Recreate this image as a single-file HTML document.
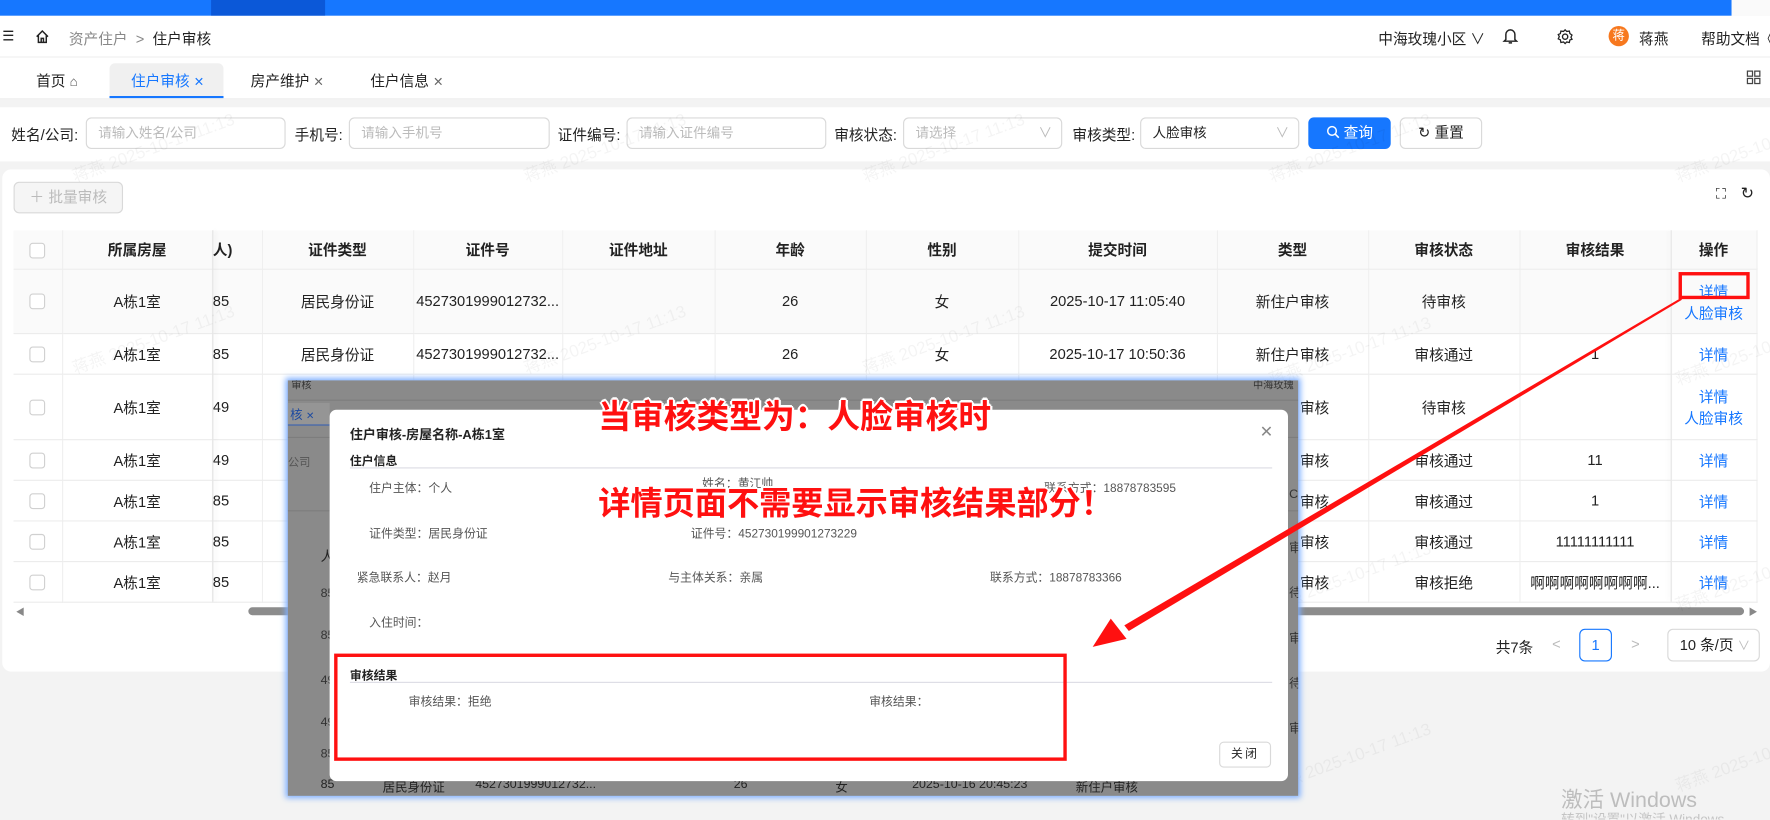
<!DOCTYPE html>
<html><head><meta charset="utf-8">
<style>
*{box-sizing:border-box;margin:0;padding:0}
html,body{width:1770px;height:820px;overflow:hidden;background:#f3f3f3;font-family:"Liberation Sans","Noto Sans CJK SC",sans-serif;color:#222}
#w{position:absolute;left:0;top:0;width:1568px;height:726px;transform:scale(1.12883);transform-origin:0 0;background:#f3f3f3;overflow:hidden}
.a{position:absolute;white-space:nowrap}
.inp{position:absolute;height:28px;border:1px solid #d9d9d9;border-radius:5px;background:#fff;font-size:12px;color:#bbb;padding:0 10px;line-height:26px}
table{border-collapse:collapse;table-layout:fixed;font-size:13px}
td,th{border-bottom:1px solid #ececec;border-right:1px solid #efefef;text-align:center;overflow:hidden;white-space:nowrap}
th{background:#fafafa;font-weight:bold;height:34px}
.cb{display:inline-block;width:14px;height:14px;border:1px solid #d0d0d0;border-radius:3px;background:#fff;vertical-align:middle}
.lk{color:#1677ff}
.wm{position:absolute;color:rgba(0,0,0,0.045);font-size:15px;transform:rotate(-20deg);white-space:nowrap}
.rt{position:absolute;color:#ff1010;font-weight:bold;white-space:nowrap;text-shadow:2px 0 #fff,-2px 0 #fff,0 2px #fff,0 -2px #fff,1px 1px #fff,-1px -1px #fff,1px -1px #fff,-1px 1px #fff}
.ml{position:absolute;font-size:10.5px;color:#555;white-space:nowrap}
.lb{position:absolute;top:109px;font-size:13px;white-space:nowrap}
</style></head><body><div id="w">
<div class="a" style="left:0;top:0;width:1534px;height:14px;background:#1677ff"></div>
<div class="a" style="left:187px;top:0;width:101px;height:14px;background:#0b58d8"></div>
<div class="a" style="left:1534px;top:0;width:34px;height:14px;background:#fafafa"></div>
<div class="a" style="left:0;top:14px;width:1568px;height:37px;background:#fff;border-bottom:1px solid #eee"></div>
<div class="a" style="left:2px;top:25px;font-size:12px">☰</div>
<svg class="a" style="left:31px;top:26px" width="13" height="13" viewBox="0 0 13 13"><path d="M1.5 6.5 L6.5 1.5 L11.5 6.5 M3 5.5 V11.5 H10 V5.5 M5.5 11.5 V8 H7.5 V11.5" fill="none" stroke="#222" stroke-width="1.3"/></svg>
<div class="a" style="left:61px;top:24px;font-size:13px;color:#888">资产住户 &nbsp;&gt;&nbsp; <span style="color:#222">住户审核</span></div>
<div class="a" style="left:1221px;top:24px;font-size:13px">中海玫瑰小区 ∨</div>
<svg class="a" style="left:1331px;top:24px" width="14" height="16" viewBox="0 0 14 16"><path d="M3 11 V6.5 A4 4 0 0 1 11 6.5 V11 L12.5 12.5 H1.5 Z M5.5 14 H8.5" fill="none" stroke="#222" stroke-width="1.3"/></svg>
<svg class="a" style="left:1379px;top:25px" width="15" height="15" viewBox="0 0 16 16"><circle cx="8" cy="8" r="2.5" fill="none" stroke="#222" stroke-width="1.3"/><path d="M8 1.5 L9.5 3 L12 2.7 L12.5 5 L14.5 6.5 L13.5 8.5 L14.5 10.5 L12.5 11 L12 13.5 L9.5 13 L8 14.5 L6.5 13 L4 13.5 L3.5 11 L1.5 10 L2.5 8 L1.5 6 L3.5 5 L4 2.7 L6.5 3 Z" fill="none" stroke="#222" stroke-width="1.2"/></svg>
<div class="a" style="left:1425px;top:23px;width:18px;height:18px;border-radius:9px;background:#f7781e;color:#fff;font-size:11px;text-align:center;line-height:18px">蒋</div>
<div class="a" style="left:1452px;top:24px;font-size:13px">蒋燕</div>
<div class="a" style="left:1507px;top:24px;font-size:13px">帮助文档《</div>
<div class="a" style="left:0;top:51px;width:1568px;height:37px;background:#fff;border-bottom:1px solid #eee"></div>
<div class="a" style="left:32px;top:61px;font-size:13px">首页 <span style="font-size:12px;color:#555">⌂</span></div>
<div class="a" style="left:97px;top:56px;width:101px;height:31px;background:#f0f0f0;border-radius:5px 5px 0 0;border-bottom:2px solid #1677ff"></div>
<div class="a" style="left:116px;top:61px;font-size:13px;color:#1677ff">住户审核 <span style="font-size:11px">✕</span></div>
<div class="a" style="left:222px;top:61px;font-size:13px">房产维护 <span style="font-size:11px;color:#666">✕</span></div>
<div class="a" style="left:328px;top:61px;font-size:13px">住户信息 <span style="font-size:11px;color:#666">✕</span></div>
<svg class="a" style="left:1547px;top:62px" width="13" height="13" viewBox="0 0 13 13"><g fill="none" stroke="#444" stroke-width="1.1"><rect x="1" y="1" width="4.5" height="4.5"/><rect x="7.5" y="1" width="4.5" height="4.5"/><rect x="1" y="7.5" width="4.5" height="4.5"/><rect x="7.5" y="7.5" width="4.5" height="4.5"/></g></svg>
<div class="a" style="left:0;top:95px;width:1568px;height:48px;background:#fff"></div>
<div class="lb" style="left:10px">姓名/公司:</div>
<div class="inp" style="left:76px;top:104px;width:177px">请输入姓名/公司</div>
<div class="lb" style="left:261px">手机号:</div>
<div class="inp" style="left:309px;top:104px;width:178px">请输入手机号</div>
<div class="lb" style="left:494px">证件编号:</div>
<div class="inp" style="left:555px;top:104px;width:177px">请输入证件编号</div>
<div class="lb" style="left:739px">审核状态:</div>
<div class="inp" style="left:800px;top:104px;width:141px">请选择<span style="position:absolute;right:8px;color:#bbb">∨</span></div>
<div class="lb" style="left:950px">审核类型:</div>
<div class="inp" style="left:1010px;top:104px;width:141px;color:#222">人脸审核<span style="position:absolute;right:8px;color:#bbb">∨</span></div>
<div class="a" style="left:1159px;top:104px;width:73px;height:28px;border-radius:5px;background:#1677ff;color:#fff;font-size:13px;line-height:28px;text-align:center">
<svg width="12" height="12" viewBox="0 0 12 12" style="vertical-align:-1px"><circle cx="5" cy="5" r="3.8" fill="none" stroke="#fff" stroke-width="1.3"/><path d="M7.8 7.8 L11 11" stroke="#fff" stroke-width="1.4"/></svg> 查询</div>
<div class="a" style="left:1240px;top:104px;width:73px;height:28px;border-radius:5px;border:1px solid #d9d9d9;background:#fff;font-size:13px;line-height:26px;text-align:center">↻ 重置</div>
<div class="a" style="left:2px;top:150px;width:1566px;height:445px;background:#fff;border-radius:8px"></div>
<div class="a" style="left:12px;top:161px;width:97px;height:28px;border:1px solid #d9d9d9;border-radius:5px;background:#f5f5f5;color:#bbb;font-size:13px;line-height:26px;text-align:center">＋ 批量审核</div>
<div class="a" style="left:1520px;top:164px;font-size:13px">⛶</div>
<div class="a" style="left:1542px;top:163px;font-size:14px">↻</div>
<table class="a" style="left:12px;top:204px;width:1544px">
<colgroup><col style="width:43px"><col style="width:133px"><col style="width:44px"><col style="width:134px"><col style="width:132px"><col style="width:135px"><col style="width:134px"><col style="width:135px"><col style="width:176px"><col style="width:134px"><col style="width:134px"><col style="width:134px"><col style="width:76px"></colgroup>
<tr><th><span class="cb"></span></th><th>所属房屋</th><th style="text-align:left">人)</th><th>证件类型</th><th>证件号</th><th>证件地址</th><th>年龄</th><th>性别</th><th>提交时间</th><th>类型</th><th>审核状态</th><th>审核结果</th><th>操作</th></tr>
<tr style="height:57px;background:#fafafa"><td><span class="cb"></span></td><td>A栋1室</td><td style="text-align:left">85</td><td>居民身份证</td><td>4527301999012732...</td><td></td><td>26</td><td>女</td><td>2025-10-17 11:05:40</td><td>新住户审核</td><td>待审核</td><td></td><td class="lk">详情<br>人脸审核</td></tr>
<tr style="height:36px"><td><span class="cb"></span></td><td>A栋1室</td><td style="text-align:left">85</td><td>居民身份证</td><td>4527301999012732...</td><td></td><td>26</td><td>女</td><td>2025-10-17 10:50:36</td><td>新住户审核</td><td>审核通过</td><td>1</td><td class="lk">详情</td></tr>
<tr style="height:58px"><td><span class="cb"></span></td><td>A栋1室</td><td style="text-align:left">49</td><td>居民身份证</td><td>4527301999012732...</td><td></td><td>26</td><td>女</td><td>2025-10-17 10:40:11</td><td>新住户审核</td><td>待审核</td><td></td><td class="lk">详情<br>人脸审核</td></tr>
<tr style="height:36px"><td><span class="cb"></span></td><td>A栋1室</td><td style="text-align:left">49</td><td>居民身份证</td><td>4527301999012732...</td><td></td><td>26</td><td>女</td><td>2025-10-17 10:30:11</td><td>新住户审核</td><td>审核通过</td><td>11</td><td class="lk">详情</td></tr>
<tr style="height:36px"><td><span class="cb"></span></td><td>A栋1室</td><td style="text-align:left">85</td><td>居民身份证</td><td>4527301999012732...</td><td></td><td>26</td><td>女</td><td>2025-10-17 10:20:11</td><td>新住户审核</td><td>审核通过</td><td>1</td><td class="lk">详情</td></tr>
<tr style="height:36px"><td><span class="cb"></span></td><td>A栋1室</td><td style="text-align:left">85</td><td>居民身份证</td><td>4527301999012732...</td><td></td><td>26</td><td>女</td><td>2025-10-17 10:10:11</td><td>新住户审核</td><td>审核通过</td><td>11111111111</td><td class="lk">详情</td></tr>
<tr style="height:36px"><td><span class="cb"></span></td><td>A栋1室</td><td style="text-align:left">85</td><td>居民身份证</td><td>4527301999012732...</td><td></td><td>26</td><td>女</td><td>2025-10-16 20:45:23</td><td>新住户审核</td><td>审核拒绝</td><td>啊啊啊啊啊啊啊啊...</td><td class="lk">详情</td></tr>
</table>
<div class="a" style="left:188px;top:204px;width:1px;height:329px;background:#e4e4e4;box-shadow:2px 0 4px rgba(0,0,0,0.08)"></div>
<div class="a" style="left:1480px;top:204px;width:1px;height:329px;background:#e8e8e8;box-shadow:-2px 0 4px rgba(0,0,0,0.06)"></div>
<div class="a" style="left:14px;top:537px;font-size:8px;color:#888">◀</div>
<div class="a" style="left:220px;top:538px;width:1325px;height:7px;border-radius:4px;background:#8c8c8c"></div>
<div class="a" style="left:1549px;top:537px;font-size:8px;color:#888">▶</div>
<div class="a" style="left:1325px;top:563px;font-size:13px">共7条</div>
<div class="a" style="left:1375px;top:563px;font-size:13px;color:#bbb">&lt;</div>
<div class="a" style="left:1399px;top:557px;width:29px;height:29px;border:1px solid #1677ff;border-radius:5px;color:#1677ff;text-align:center;line-height:27px;font-size:13px">1</div>
<div class="a" style="left:1445px;top:563px;font-size:13px;color:#bbb">&gt;</div>
<div class="a" style="left:1477px;top:557px;width:82px;height:29px;border:1px solid #d9d9d9;border-radius:5px;font-size:13px;line-height:27px;padding-left:10px">10 条/页 <span style="color:#bbb;font-size:11px">∨</span></div>
<div class="wm" style="left:60px;top:120px">蒋燕 2025-10-17 11:13</div>
<div class="wm" style="left:460px;top:120px">蒋燕 2025-10-17 11:13</div>
<div class="wm" style="left:760px;top:120px">蒋燕 2025-10-17 11:13</div>
<div class="wm" style="left:1120px;top:120px">蒋燕 2025-10-17 11:13</div>
<div class="wm" style="left:1480px;top:120px">蒋燕 2025-10-17 11:13</div>
<div class="wm" style="left:60px;top:290px">蒋燕 2025-10-17 11:13</div>
<div class="wm" style="left:460px;top:290px">蒋燕 2025-10-17 11:13</div>
<div class="wm" style="left:760px;top:290px">蒋燕 2025-10-17 11:13</div>
<div class="wm" style="left:1120px;top:300px">蒋燕 2025-10-17 11:13</div>
<div class="wm" style="left:1480px;top:300px">蒋燕 2025-10-17 11:13</div>
<div class="wm" style="left:1120px;top:500px">蒋燕 2025-10-17 11:13</div>
<div class="wm" style="left:1480px;top:500px">蒋燕 2025-10-17 11:13</div>
<div class="wm" style="left:1120px;top:660px">蒋燕 2025-10-17 11:13</div>
<div class="wm" style="left:1480px;top:660px">蒋燕 2025-10-17 11:13</div>
<div class="a" style="left:1383px;top:694px;font-size:19px;color:#bdbdbd">激活 Windows</div>
<div class="a" style="left:1383px;top:717px;font-size:12px;color:#c4c4c4">转到"设置"以激活 Windows</div>
<div class="a" style="left:255px;top:337px;width:895px;height:368px;background:#8a8a8a;box-shadow:0 0 5px 2px #7fb0ff;overflow:hidden">
  <div class="a" style="left:3px;top:-3px;font-size:9px;color:#333">审核</div>
  <div class="a" style="left:855px;top:-3px;font-size:9px;color:#333">中海玫瑰</div>
  <div class="a" style="left:0;top:17px;width:895px;height:1px;background:#7d7d7d"></div>
  <div class="a" style="left:0;top:20px;width:37px;height:20px;background:#959595;border-bottom:1px solid #3a62b0"></div>
  <div class="a" style="left:2px;top:22px;font-size:11px;color:#1d4aa0">核 <span style="font-size:9px">✕</span></div>
  <div class="a" style="left:0;top:50px;width:895px;height:1px;background:#7d7d7d"></div>
  <div class="a" style="left:0;top:64px;font-size:10px;color:#555">公司</div>
  <div class="a" style="left:0;top:115px;width:895px;height:1px;background:#7d7d7d"></div>
  <div class="a" style="left:29px;top:147px;font-size:12px;color:#222">人</div>
  <div class="a" style="left:29px;top:183px;font-size:11px;color:#333">85</div>
  <div class="a" style="left:29px;top:220px;font-size:11px;color:#333">85</div>
  <div class="a" style="left:29px;top:260px;font-size:11px;color:#333">49</div>
  <div class="a" style="left:29px;top:297px;font-size:11px;color:#333">49</div>
  <div class="a" style="left:29px;top:325px;font-size:11px;color:#333">85</div>
  <div class="a" style="left:29px;top:352px;font-size:11px;color:#222">85</div>
  <div class="a" style="left:84px;top:352px;font-size:11px;color:#222">居民身份证</div>
  <div class="a" style="left:166px;top:352px;font-size:11px;color:#222">4527301999012732...</div>
  <div class="a" style="left:395px;top:352px;font-size:11px;color:#222">26</div>
  <div class="a" style="left:485px;top:352px;font-size:11px;color:#222">女</div>
  <div class="a" style="left:553px;top:352px;font-size:11px;color:#222">2025-10-16 20:45:23</div>
  <div class="a" style="left:698px;top:352px;font-size:11px;color:#222">新住户审核</div>
  <div class="a" style="left:887px;top:95px;font-size:11px;color:#333">C</div>
  <div class="a" style="left:887px;top:140px;font-size:11px;color:#333">审</div>
  <div class="a" style="left:887px;top:180px;font-size:11px;color:#333">待</div>
  <div class="a" style="left:887px;top:220px;font-size:11px;color:#333">审</div>
  <div class="a" style="left:887px;top:260px;font-size:11px;color:#333">待</div>
  <div class="a" style="left:887px;top:300px;font-size:11px;color:#333">审</div>
</div>
<div class="a" style="left:292px;top:363px;width:849px;height:329px;background:#fff;border-radius:6px"></div>
<div class="a" style="left:310px;top:377px;font-size:11.5px;font-weight:bold">住户审核-房屋名称-A栋1室</div>
<div class="a" style="left:1116px;top:374px;font-size:14px;color:#888">✕</div>
<div class="a" style="left:310px;top:401px;font-size:10.5px;font-weight:bold">住户信息</div>
<div class="a" style="left:310px;top:414px;width:817px;height:1px;background:#dcdce4"></div>
<div class="ml" style="left:327px;top:425px">住户主体：个人</div>
<div class="ml" style="left:622px;top:421px">姓名：黄江帅</div>
<div class="ml" style="left:925px;top:425px">联系方式：18878783595</div>
<div class="ml" style="left:327px;top:465px">证件类型：居民身份证</div>
<div class="ml" style="left:612px;top:465px">证件号：452730199901273229</div>
<div class="ml" style="left:316px;top:504px">紧急联系人：赵月</div>
<div class="ml" style="left:592px;top:504px">与主体关系：亲属</div>
<div class="ml" style="left:877px;top:504px">联系方式：18878783366</div>
<div class="ml" style="left:327px;top:544px">入住时间：</div>
<div class="a" style="left:310px;top:591px;font-size:10.5px;font-weight:bold">审核结果</div>
<div class="a" style="left:310px;top:604px;width:817px;height:1px;background:#dcdce4"></div>
<div class="ml" style="left:362px;top:614px">审核结果：拒绝</div>
<div class="ml" style="left:770px;top:614px">审核结果：</div>
<div class="a" style="left:1080px;top:657px;width:46px;height:23px;border:1px solid #d9d9d9;border-radius:4px;font-size:10.5px;line-height:21px;text-align:center;letter-spacing:2px">关闭</div>
<div class="a" style="left:296px;top:579px;width:649px;height:95px;border:3px solid #ff1010"></div>
<div class="a" style="left:1487px;top:241px;width:63px;height:24px;border:3px solid #ff1010"></div>
<div class="rt" style="left:530px;top:346px;font-size:29px">当审核类型为：人脸审核时</div>
<div class="rt" style="left:530px;top:424px;font-size:28.5px">详情页面不需要显示审核结果部分！</div>
<svg class="a" style="left:0;top:0" width="1568" height="726" viewBox="0 0 1568 726">
<polygon points="1489,264 1490,265.5 1000,559 996,554" fill="#ff1010"/>
<polygon points="968,573 984,548 998,566" fill="#ff1010"/>
</svg>
</div></body></html>
